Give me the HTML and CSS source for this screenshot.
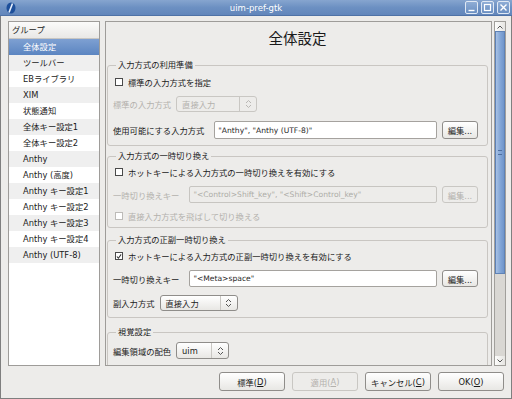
FILE: index.html
```
<!DOCTYPE html>
<html lang="ja">
<head>
<meta charset="utf-8">
<title>uim-pref-gtk</title>
<link rel="stylesheet" href="styles.css">
</head>
<body>
<div class="window">
  <div class="titlebar">
    <svg class="appicon" width="12" height="12" viewBox="0 0 12 12"><ellipse cx="6" cy="6" rx="4.5" ry="5.5" fill="#1d4f9a"/><path d="M7.5 1.5 L4 10.5" stroke="#e8f0fb" stroke-width="1.6"/></svg>
    <div class="title">uim-pref-gtk</div>
    <div class="wbtns">
      <span class="wbtn"><svg width="13" height="13" viewBox="0 0 13 13"><path d="M3.5 9.5h6" stroke="#fff" stroke-width="1.4"/></svg></span>
      <span class="wbtn"><svg width="13" height="13" viewBox="0 0 13 13"><rect x="3.5" y="3.5" width="6" height="6" fill="none" stroke="#fff" stroke-width="1.2"/></svg></span>
      <span class="wbtn"><svg width="13" height="13" viewBox="0 0 13 13"><path d="M3.5 3.5l6 6M9.5 3.5l-6 6" stroke="#fff" stroke-width="1.4"/></svg></span>
    </div>
  </div>
  <div class="content">
    <div class="top">
      <div class="list">
        <div class="lhead">グループ</div>
        <div class="item sel">全体設定</div>
        <div class="item alt">ツールバー</div>
        <div class="item">EBライブラリ</div>
        <div class="item alt">XIM</div>
        <div class="item">状態通知</div>
        <div class="item alt">全体キー設定1</div>
        <div class="item">全体キー設定2</div>
        <div class="item alt">Anthy</div>
        <div class="item">Anthy (高度)</div>
        <div class="item alt">Anthy キー設定1</div>
        <div class="item">Anthy キー設定2</div>
        <div class="item alt">Anthy キー設定3</div>
        <div class="item">Anthy キー設定4</div>
        <div class="item alt">Anthy (UTF-8)</div>
      </div>
      <div class="scrollwin">
        <div class="viewport">
          <div class="heading">全体設定</div>

          <fieldset class="grp g1">
            <legend>入力方式の利用準備</legend>
            <div class="row chk-row r-a"><span class="cb"></span><span>標準の入力方式を指定</span></div>
            <div class="row r-b dis"><span class="lbl">標準の入力方式</span><span class="combo w80 dis"><span class="ctext">直接入力</span><span class="carrow"><svg width="7" height="10" viewBox="0 0 7 10"><path d="M1 4l2.5-2.5L6 4M1 6l2.5 2.5L6 6" fill="none" stroke="#b9b7b4" stroke-width="1"/></svg></span></span></div>
            <div class="row r-c"><span class="lbl">使用可能にする入力方式</span><span class="entry">"Anthy", "Anthy (UTF-8)"</span><span class="btn edit">編集...</span></div>
          </fieldset>

          <fieldset class="grp g2">
            <legend>入力方式の一時切り換え</legend>
            <div class="row chk-row r-a2"><span class="cb"></span><span>ホットキーによる入力方式の一時切り換えを有効にする</span></div>
            <div class="row r-c2 dis"><span class="lbl">一時切り換えキー</span><span class="entry dis">"&lt;Control&gt;Shift_key", "&lt;Shift&gt;Control_key"</span><span class="btn edit dis">編集...</span></div>
            <div class="row chk-row r-d dis"><span class="cb dis"></span><span>直接入力方式を飛ばして切り換える</span></div>
          </fieldset>

          <fieldset class="grp g3">
            <legend>入力方式の正副一時切り換え</legend>
            <div class="row chk-row r-a2"><span class="cb"><svg width="7" height="7" viewBox="0 0 7 7"><path d="M1 3.5l1.8 2L6 1" fill="none" stroke="#333" stroke-width="1.2"/></svg></span><span>ホットキーによる入力方式の正副一時切り換えを有効にする</span></div>
            <div class="row r-c3"><span class="lbl">一時切り換えキー</span><span class="entry">"&lt;Meta&gt;space"</span><span class="btn edit">編集...</span></div>
            <div class="row r-e"><span class="lbl">副入力方式</span><span class="combo w78"><span class="ctext">直接入力</span><span class="carrow"><svg width="7" height="10" viewBox="0 0 7 10"><path d="M1 4l2.5-2.5L6 4M1 6l2.5 2.5L6 6" fill="none" stroke="#555" stroke-width="1"/></svg></span></span></div>
          </fieldset>

          <fieldset class="grp g4">
            <legend>視覚設定</legend>
            <div class="row r-f"><span class="lbl">編集領域の配色</span><span class="combo w53"><span class="ctext">uim</span><span class="carrow"><svg width="7" height="10" viewBox="0 0 7 10"><path d="M1 4l2.5-2.5L6 4M1 6l2.5 2.5L6 6" fill="none" stroke="#555" stroke-width="1"/></svg></span></span></div>
            <div class="spacer"></div>
          </fieldset>
        </div>
        <div class="scrollbar">
          <div class="step"><svg width="8" height="6" viewBox="0 0 8 6"><path d="M1.5 4.5l2.5-2.5 2.5 2.5" fill="none" stroke="#555" stroke-width="1"/></svg></div>
          <div class="trough">
            <div class="thumb"><span class="grip"></span></div>
          </div>
          <div class="step"><svg width="8" height="6" viewBox="0 0 8 6"><path d="M1.5 1.5l2.5 2.5 2.5-2.5" fill="none" stroke="#555" stroke-width="1"/></svg></div>
        </div>
      </div>
    </div>
    <div class="buttons">
      <span class="btn dbtn">標準(<u>D</u>)</span>
      <span class="btn dbtn dis">適用(<u>A</u>)</span>
      <span class="btn dbtn">キャンセル(<u>C</u>)</span>
      <span class="btn dbtn">OK(<u>O</u>)</span>
    </div>
  </div>
</div>
</body>
</html>
```
FILE: styles.css
```
* { box-sizing: border-box; }
html, body { margin: 0; padding: 0; }
body {
  width: 512px; height: 399px; overflow: hidden;
  font-family: "DejaVu Sans", "Noto Sans CJK JP", sans-serif;
  font-size: 8.3px; color: #1a1a1a;
  background: #edecea;
}
.window {
  width: 512px; height: 399px;
  display: flex; flex-direction: column;
  border: 1px solid #7f7f7f; border-top: none;
  background: #edecea;
}
.titlebar {
  height: 16px; flex: none;
  display: flex; align-items: center;
  background: linear-gradient(#86a5cf, #6c90c2 50%, #6286bb);
  border-bottom: 1px solid #4f72a6;
  margin: 0 -1px; padding: 0 2px 0 5px;
}
.appicon { flex: none; }
.title { flex: 1; text-align: center; color: #fff; font-size: 8.5px; padding-left: 30px; }
.wbtns { display: flex; gap: 3px; }
.wbtn {
  width: 13px; height: 13px; display: block;
  border: 1px solid #dfe8f4; border-radius: 2px;
  background: linear-gradient(#8fadd5, #6a8fc2);
}
.wbtn svg { display: block; margin: -1px; }
.content { flex: 1; display: flex; flex-direction: column; padding: 5px 5px 0 7px; }
.top { display: flex; height: 345px; gap: 5px; }
.list {
  width: 92px; flex: none; background: #fff;
  border: 1px solid #9e9c99;
}
.lhead {
  height: 17px; line-height: 16px; padding-left: 3px;
  background: linear-gradient(#fbfbfa, #e9e8e6);
  border-bottom: 1px solid #c8c6c2;
}
.item { height: 16px; line-height: 16px; padding-left: 14px; }
.item.alt { background: #efefef; }
.item.sel { background: linear-gradient(#7ea0d2, #5b85c1); color: #fff; }
.scrollwin { flex: 1; display: flex; gap: 2px; }
.viewport {
  flex: 1; border: 1px solid #9e9c99; overflow: hidden;
  padding: 0 3px 0 1px;
}
.heading { text-align: center; font-size: 14.5px; line-height: 18px; margin: 8px 0 11px; }
.grp {
  margin: 0; padding: 0 5px 6px 5px; min-width: 0;
  border: 1px solid #c9c6c2; border-radius: 3px;
}
.grp legend { padding: 0 2px; margin-left: 3px; line-height: 12px; }
.g2 { margin-top: 4px; padding-bottom: 4px; }
.g3 { margin-top: 6px; }
.g4 { margin-top: 8px; }
.row { display: flex; align-items: center; }
.chk-row { height: 14px; padding-left: 2px; }
.r-a { margin-top: 4px; }
.r-a2 { margin-top: 3px; }
.r-b { margin-top: 7px; height: 16px; }
.r-c { margin-top: 9px; height: 18px; gap: 5px; }
.r-c2 { margin-top: 7px; height: 17px; gap: 5px; }
.r-c3 { margin-top: 7px; height: 17px; gap: 5px; }
.r-d { margin-top: 6px; }
.r-e { margin-top: 8px; height: 16px; }
.r-f { margin-top: 4px; height: 17px; }
.spacer { height: 20px; }
.lbl { margin-right: 5px; white-space: nowrap; }
.dis { color: #b3b1ad; }
.cb {
  width: 8px; height: 8px; flex: none; margin-right: 5px;
  border: 1px solid #4a4a4a; background: #fff;
  display: flex; align-items: center; justify-content: center;
}
.cb.dis { border-color: #bdbbb8; }
.entry {
  flex: 1; height: 100%; display: flex; align-items: center;
  background: #fff; border: 1px solid #a5a29e; border-radius: 2px;
  padding-left: 3px; white-space: nowrap; overflow: hidden;
  font-size: 7.6px; color: #2a2a2a;
}
.entry.dis { background: #edecea; border-color: #c7c5c1; color: #aeaca8; }
.btn {
  display: flex; align-items: center; justify-content: center;
  border: 1px solid #8f8d8a; border-radius: 3px;
  background: linear-gradient(#ffffff, #e8e7e4);
  white-space: nowrap;
}
.btn.dis { border-color: #c9c7c3; background: #edecea; color: #b3b1ad; }
.edit { width: 36px; height: 100%; flex: none; margin-right: 4px; }
.combo {
  height: 100%; display: flex; align-items: center;
  border: 1px solid #8f8d8a; border-radius: 3px;
  background: linear-gradient(#ffffff, #e8e7e4);
}
.combo.dis { border-color: #c9c7c3; background: #edecea; }
.w80 { width: 81px; }
.w78 { width: 78px; }
.w53 { width: 53px; }
.ctext { flex: 1; padding-left: 5px; }
.carrow {
  width: 17px; height: 100%; display: flex; align-items: center; justify-content: center;
  border-left: 1px solid #c9c7c3;
}
.scrollbar {
  width: 12px; flex: none; display: flex; flex-direction: column;
  border: 1px solid #a19f9b; background: #d9d7d3;
}
.step {
  height: 9px; display: flex; align-items: center; justify-content: center;
  background: linear-gradient(90deg, #fdfdfc, #e6e5e2);
}
.trough { flex: 1; }
.thumb {
  height: 243px; display: flex; align-items: center; justify-content: center;
  background: linear-gradient(90deg, #a7c1e4, #7fa3d5 60%, #6f95cb);
  border: 1px solid #5e82b6;
}
.grip { width: 4px; height: 5px; border-top: 1px solid #4d6fa0; border-bottom: 1px solid #4d6fa0; }
.buttons { display: flex; justify-content: flex-end; gap: 7px; margin-top: 6px; padding-right: 2px; }
.dbtn { width: 66px; height: 19px; }
.dbtn u { text-decoration: underline; }
```
